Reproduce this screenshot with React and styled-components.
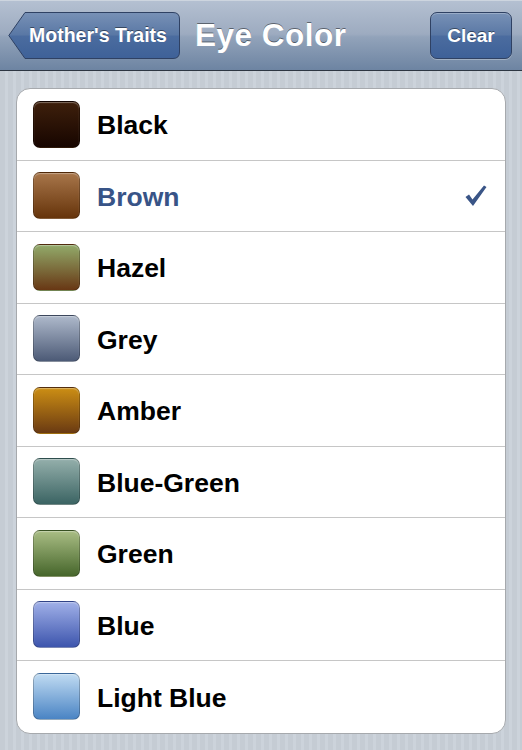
import styled, { createGlobalStyle } from 'styled-components';

const GlobalStyle = createGlobalStyle`
  html, body {
    margin: 0;
    padding: 0;
    font-family: "Liberation Sans", Arial, sans-serif;
    background: #c8cfd7;
  }
`;

const Screen = styled.div`
  width: 522px;
  height: 750px;
  overflow: hidden;
  display: flex;
  flex-direction: column;
  background: repeating-linear-gradient(90deg, #c5ccd4 0 5px, #ccd3db 5px 8px);
`;

const NavBar = styled.header`
  height: 71px;
  flex-shrink: 0;
  display: flex;
  align-items: center;
  padding: 0 10px 0 8px;
  box-sizing: border-box;
  background: linear-gradient(#b4c0d1 0%, #9dabc0 48%, #92a3ba 52%, #6d84a2 100%);
  border-top: 1px solid #cdd5df;
  border-bottom: 1px solid #2d3642;
`;

const BackButton = styled.button`
  position: relative;
  width: 172px;
  height: 47px;
  padding: 0 12px 0 20px;
  border: 0;
  background: none;
  color: #fff;
  font-family: inherit;
  font-size: 19.5px;
  font-weight: bold;
  text-shadow: 0 -1px 0 rgba(0, 0, 0, 0.45);
  cursor: pointer;

  svg {
    position: absolute;
    inset: 0;
    z-index: 0;
  }

  span {
    position: relative;
    z-index: 1;
  }
`;

const Title = styled.h1`
  flex: 1;
  margin: 0 0 0 15px;
  color: #fff;
  font-size: 31.5px;
  letter-spacing: 0.5px;
  font-weight: bold;
  text-shadow: 0 -1px 0 rgba(0, 0, 0, 0.45);
`;

const BarButton = styled.button`
  width: 82px;
  height: 47px;
  border: 1px solid #2f4163;
  border-radius: 7px;
  background: linear-gradient(#7891b6 0%, #5a78a5 48%, #4b6c9f 52%, #3e6198 100%);
  box-shadow: inset 0 1px 0 rgba(255, 255, 255, 0.25), 0 1px 0 rgba(255, 255, 255, 0.3);
  color: #fff;
  font-family: inherit;
  font-size: 19px;
  font-weight: bold;
  text-shadow: 0 -1px 0 rgba(0, 0, 0, 0.45);
  cursor: pointer;
`;

const Table = styled.ul`
  list-style: none;
  margin: 17px 16px 0;
  padding: 0;
  background: #fff;
  border: 1px solid #a6a9ad;
  border-radius: 14px;
  overflow: hidden;
`;

const Row = styled.li`
  height: 71.5px;
  box-sizing: border-box;
  display: flex;
  align-items: center;
  gap: 17px;
  padding: 0 17px 0 16px;
  border-bottom: 1px solid #c6c6c6;

  &:last-child {
    border-bottom: 0;
  }
`;

const Swatch = styled.div`
  width: 47px;
  height: 47px;
  flex-shrink: 0;
  box-sizing: border-box;
  border-radius: 7px;
  border: 1px solid rgba(0, 0, 0, 0.22);
  background: linear-gradient(${({ $top }) => $top}, ${({ $bottom }) => $bottom});
  box-shadow: inset 0 1px 1px rgba(255, 255, 255, 0.35);
`;

const Label = styled.span`
  flex: 1;
  padding-top: 3px;
  font-size: 26.5px;
  font-weight: bold;
  color: ${({ $selected }) => ($selected ? '#385487' : '#000')};
`;

const colors = [
  { name: 'Black', top: '#3e200c', bottom: '#170500' },
  { name: 'Brown', top: '#a8764a', bottom: '#66340b' },
  { name: 'Hazel', top: '#92aa6a', bottom: '#683714' },
  { name: 'Grey', top: '#aeb9cb', bottom: '#4c5a76' },
  { name: 'Amber', top: '#cc8e14', bottom: '#6a3a12' },
  { name: 'Blue-Green', top: '#94afab', bottom: '#3b6463' },
  { name: 'Green', top: '#a9bd84', bottom: '#46662b' },
  { name: 'Blue', top: '#a0b0e8', bottom: '#3d55ad' },
  { name: 'Light Blue', top: '#c0dbf2', bottom: '#4a84c4' },
];

function BackShape() {
  return (
    <svg width="172" height="47" viewBox="0 0 172 47">
      <defs>
        <linearGradient id="backFill" x1="0" y1="0" x2="0" y2="1">
          <stop offset="0" stopColor="#7891b6" />
          <stop offset="0.48" stopColor="#5a78a5" />
          <stop offset="0.52" stopColor="#4b6c9f" />
          <stop offset="1" stopColor="#3e6198" />
        </linearGradient>
      </defs>
      <path
        d="M17 0.5 H165 Q171.5 0.5 171.5 7 V40 Q171.5 46.5 165 46.5 H17 L0.8 23.5 Z"
        fill="url(#backFill)"
        stroke="#2f4163"
        strokeWidth="1"
      />
    </svg>
  );
}

function Check() {
  return (
    <svg width="24" height="24" viewBox="0 0 24 24">
      <path
        d="M1.5 13 L5 10.5 L8.5 15.5 L20 1.5 L22.5 3 L9 22 Z"
        fill="#3a5587"
      />
    </svg>
  );
}

export default function App() {
  const selected = 'Brown';

  return (
    <Screen>
      <GlobalStyle />
      <NavBar>
        <BackButton>
          <BackShape />
          <span>Mother's Traits</span>
        </BackButton>
        <Title>Eye Color</Title>
        <BarButton>Clear</BarButton>
      </NavBar>

      <Table>
        {colors.map(c => (
          <Row key={c.name}>
            <Swatch $top={c.top} $bottom={c.bottom} />
            <Label $selected={c.name === selected}>{c.name}</Label>
            {c.name === selected && <Check />}
          </Row>
        ))}
      </Table>
    </Screen>
  );
}
